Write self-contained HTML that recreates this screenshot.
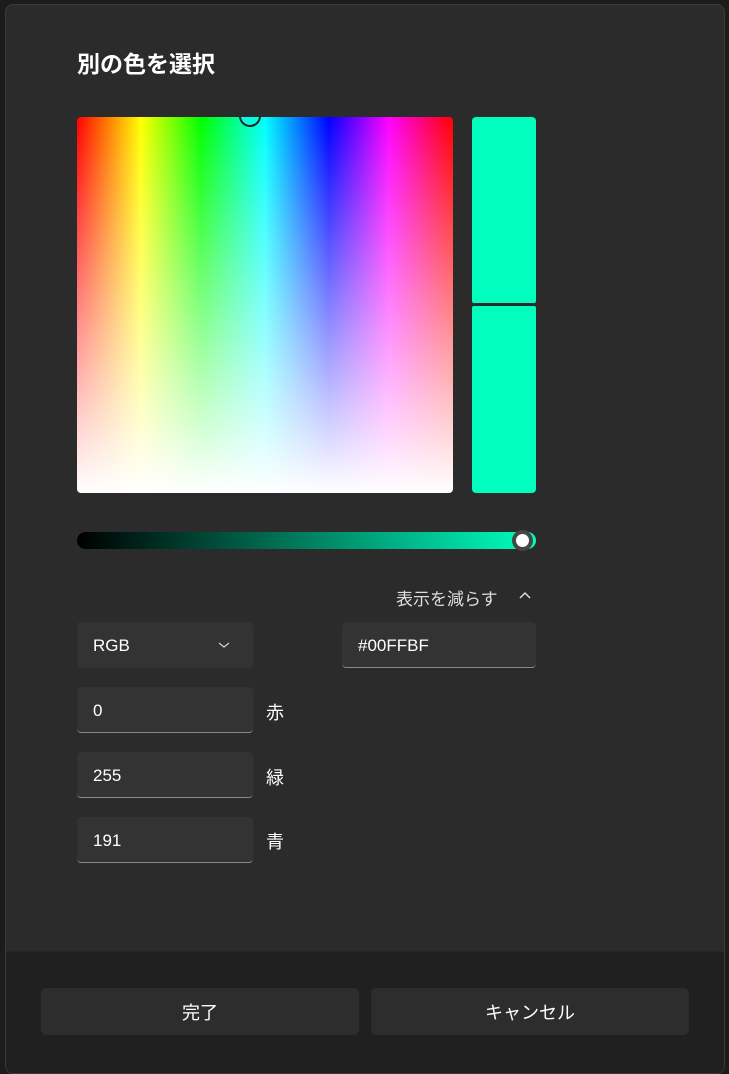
<!DOCTYPE html>
<html><head><meta charset="utf-8"><style>
*{margin:0;padding:0;box-sizing:border-box}
body{width:729px;height:1062px;background:#1c1c1c;position:relative;overflow:hidden;font-family:"Liberation Sans","Noto Sans CJK JP",sans-serif;color:#fff}
.dlg{position:absolute;left:5px;top:4px;width:720px;height:1070px;background:#2b2b2b;border:1px solid #3a3a3a;border-radius:8px;overflow:hidden}
.foot{position:absolute;left:0;top:946px;width:100%;height:130px;background:#202020;border-top:1px solid #262626}
.a{position:absolute}
h1{position:absolute;left:71px;top:40px;font-size:23px;font-weight:bold}
.spec{left:71px;top:112px;width:376px;height:376px;border-radius:4px;background:linear-gradient(to bottom,rgba(255,255,255,0),#fff),linear-gradient(to right,#f00,#ff0 17%,#0f0 33%,#0ff 50%,#00f 67%,#f0f 83%,#f00)}
.prev{left:466px;width:64px;background:#00ffbf}
.sl{left:71px;top:527px;width:459px;height:17px;border-radius:9px;background:linear-gradient(to right,#000,#00ffbf)}
.box{background:#333;border-radius:4px;border-bottom:1px solid #8a8a8a;height:46px;font-size:17px;padding:14px 0 0 16px}
.lbl{font-size:18px;color:#fff}
.btn{top:983px;height:47px;width:318px;background:#2d2d2d;border-radius:5px;text-align:center;font-size:18px;padding-top:11px}
</style></head><body>
<div class="dlg">
<h1>別の色を選択</h1>
<div class="a spec"></div>
<div class="a" style="left:233px;top:100px;width:22px;height:22px;border:2px solid #222;border-radius:50%;background:#00ffe0;clip-path:inset(12px 0 0 0)"></div>
<div class="a prev" style="top:112px;height:186px;border-radius:4px 4px 2px 2px"></div>
<div class="a prev" style="top:301px;height:187px;border-radius:2px 2px 4px 4px"></div>
<div class="a sl"></div>
<div class="a" style="left:506px;top:525px;width:21px;height:21px;border-radius:50%;background:#454545;"></div>
<div class="a" style="left:510px;top:529px;width:13px;height:13px;border-radius:50%;background:#fff"></div>
<div class="a" style="left:390px;top:580px;font-size:17px;color:#ddd">表示を減らす</div>
<svg class="a" style="left:512px;top:585px" width="14" height="10"><path d="M2 8L7 3L12 8" stroke="#ddd" stroke-width="1.5" fill="none"/></svg>
<div class="a box" style="left:71px;top:617px;width:176px;border-bottom:none">RGB</div>
<svg class="a" style="left:212px;top:636px" width="12" height="8"><path d="M1 2L6 6L11 2" stroke="#ccc" stroke-width="1.3" fill="none"/></svg>
<div class="a box" style="left:336px;top:617px;width:194px">#00FFBF</div>
<div class="a box" style="left:71px;top:682px;width:176px">0</div>
<div class="a box" style="left:71px;top:747px;width:176px">255</div>
<div class="a box" style="left:71px;top:812px;width:176px">191</div>
<div class="a lbl" style="left:260px;top:694px">赤</div>
<div class="a lbl" style="left:260px;top:759px">緑</div>
<div class="a lbl" style="left:260px;top:823px">青</div>
<div class="foot"></div>
<div class="a btn" style="left:35px">完了</div>
<div class="a btn" style="left:365px">キャンセル</div>
</div>
</body></html>
